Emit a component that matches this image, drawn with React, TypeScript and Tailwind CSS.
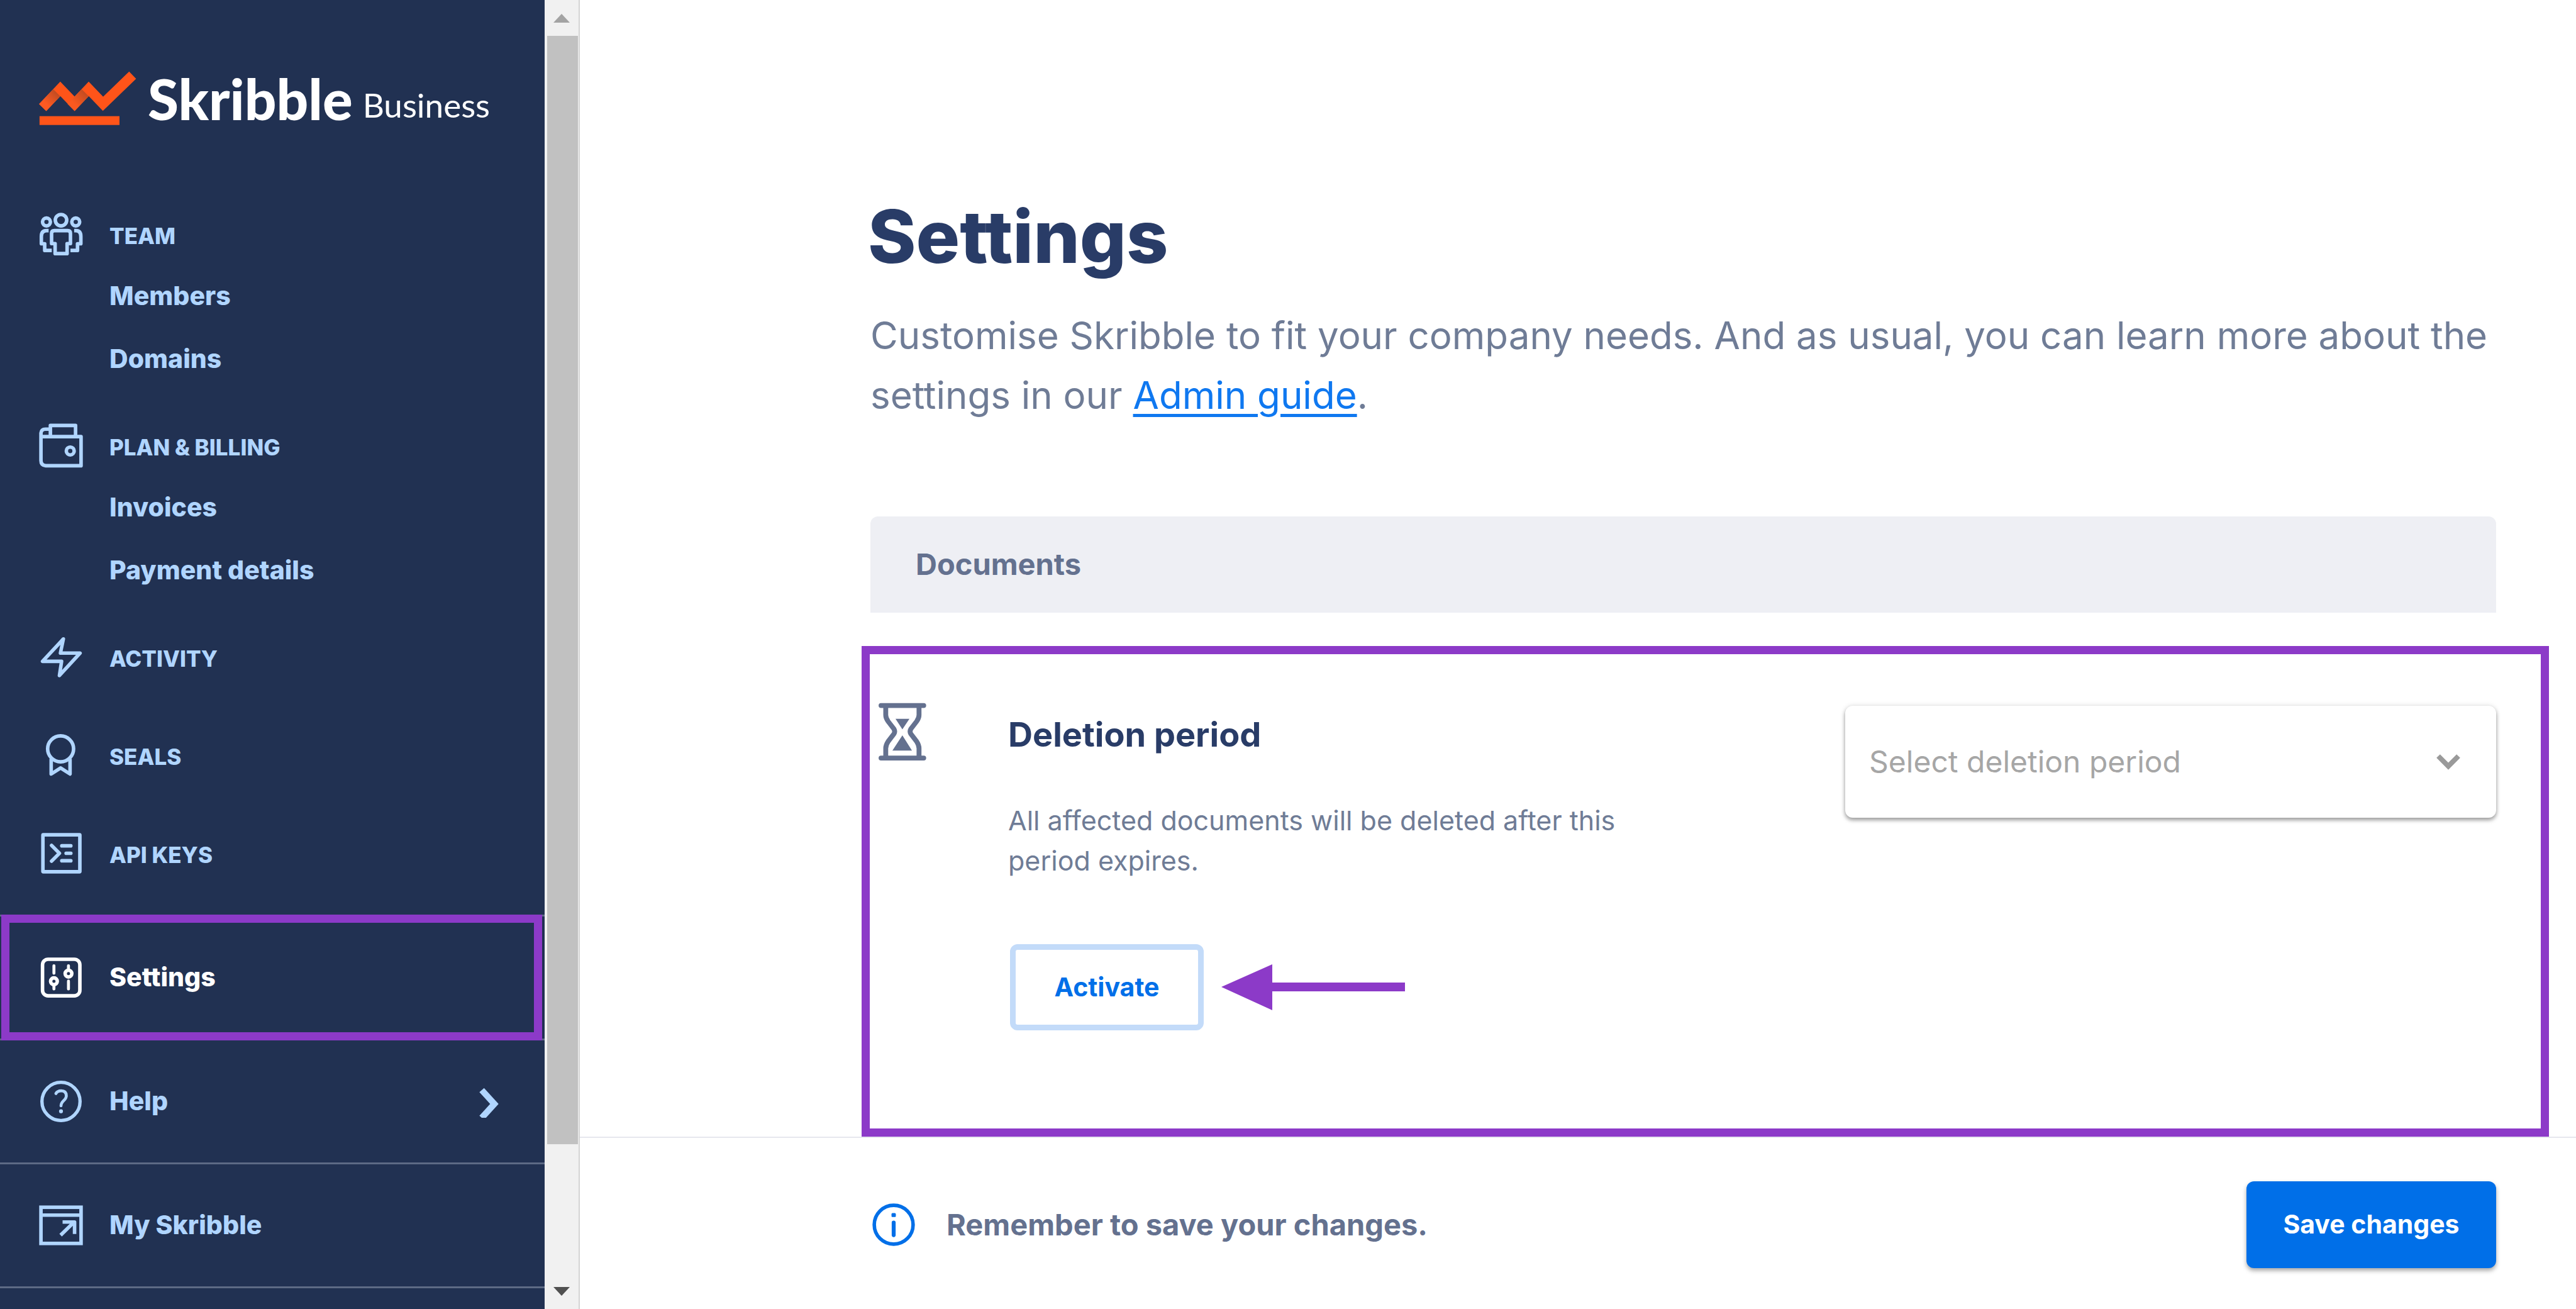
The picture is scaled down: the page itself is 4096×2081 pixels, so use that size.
import React from "react";

type IconProps = { children: React.ReactNode; viewBox: string };

function NavIcon({ children, viewBox }: IconProps) {
  return (
    <svg
      viewBox={viewBox}
      className="size-[70px] shrink-0 overflow-visible"
      fill="none"
      stroke="currentColor"
      strokeWidth="18"
      strokeLinejoin="round"
      aria-hidden="true"
    >
      {children}
    </svg>
  );
}

const TeamIcon = () => (
  <NavIcon viewBox="48 70 224 224">
    <circle cx="160" cy="102" r="29" />
    <circle cx="86" cy="111" r="20" />
    <circle cx="235" cy="111" r="20" />
    <path d="M126 155H194Q208 155 208 169V221H191V272H130V221H112V169Q112 155 126 155Z" />
    <path d="M97 155H86Q60 155 60 185V222H77V256H113" />
    <path d="M227 155H236Q261 155 261 185V222H244V256H208" />
  </NavIcon>
);

const WalletIcon = () => (
  <NavIcon viewBox="48 66 224 224">
    <path d="M58 124H262V272H82Q58 270 58 246V106Q60 86 80 86H105" />
    <path d="M106 124V67H234V124" />
    <circle cx="207" cy="197" r="20" />
  </NavIcon>
);

const BoltIcon = () => (
  <NavIcon viewBox="48 4 224 224">
    <path d="M172 16L66 130H163L152 202L257 88H157Z" />
  </NavIcon>
);

const SealIcon = () => (
  <NavIcon viewBox="48 504 224 224">
    <circle cx="158" cy="576" r="66" />
    <path d="M110 626V704L158 673L206 704V626" />
  </NavIcon>
);

const TerminalIcon = () => (
  <NavIcon viewBox="48 1004 224 224">
    <rect x="68" y="1014" width="188" height="188" rx="2" />
    <path d="M112 1068L152 1108L112 1148M164 1070H210M186 1108H210M164 1146H210" strokeLinecap="round" />
  </NavIcon>
);

const SlidersIcon = () => (
  <NavIcon viewBox="48 -112 224 224">
    <rect x="66" y="-93" width="190" height="186" rx="28" />
    <circle cx="124" cy="19" r="17" />
    <circle cx="198" cy="-20" r="17" />
    <path d="M124 -60V-22M124 38V58M198 -60V-40M198 18V58" strokeLinecap="round" strokeWidth="15" />
  </NavIcon>
);

const HelpIcon = () => (
  <NavIcon viewBox="48 -112 224 224">
    <circle cx="160" cy="0" r="97" strokeWidth="17" />
    <path d="M134 -40Q142 -54 161 -54Q187 -54 187 -28C187 -6 160 -2 160 22" strokeLinecap="round" strokeWidth="15" />
    <circle cx="160" cy="50" r="10" fill="currentColor" stroke="none" />
  </NavIcon>
);

const WindowIcon = () => (
  <NavIcon viewBox="48 -112 224 224">
    <rect x="58" y="-92" width="204" height="184" strokeLinejoin="miter" />
    <path d="M58 -52H262M158 50L226 -16M168 -17H229V44" />
  </NavIcon>
);

function LogoMark() {
  return (
    <svg viewBox="50 60 496 276" className="h-[86px] w-[155px]" aria-hidden="true">
      <defs>
        <linearGradient id="fold1" gradientUnits="userSpaceOnUse" x1="86" y1="228" x2="140" y2="172">
          <stop offset="0" stopColor="#ff5a22" />
          <stop offset="1" stopColor="#c24c22" />
        </linearGradient>
        <linearGradient id="fold2" gradientUnits="userSpaceOnUse" x1="231" y1="228" x2="286" y2="172">
          <stop offset="0" stopColor="#f9591f" />
          <stop offset="1" stopColor="#c24c22" />
        </linearGradient>
      </defs>
      <path d="M68 246L158 151L231 227L303 151L376 227L527 81" fill="none" stroke="#ff5419" strokeWidth="51" />
      <path d="M50 228L122 152L158 188L86 264Z" fill="url(#fold1)" />
      <path d="M208 215L267 152L303 188L231 264L195 228Z" fill="url(#fold2)" />
      <rect x="52" y="290" width="408" height="45" fill="#ff5419" />
    </svg>
  );
}

function Hourglass() {
  return (
    <svg viewBox="30 38 255 302" className="h-[94px] w-[80px] shrink-0" fill="none" stroke="#64718f" aria-hidden="true">
      <path d="M48 56H266M48 324H266" strokeWidth="25" strokeLinecap="round" />
      <path
        d="M72 60V105Q72 120 84 137L114 176Q121 188 114 201L84 240Q72 258 72 275V320M242 60V105Q242 120 230 137L200 176Q193 188 200 201L230 240Q242 258 242 275V320"
        strokeWidth="25"
      />
      <path d="M122 124H193L157 178ZM157 208L206 286H106Z" fill="#64718f" stroke="none" />
    </svg>
  );
}

function NavSection({ icon, label, children }: { icon: React.ReactNode; label: string; children?: React.ReactNode }) {
  return (
    <li>
      <a href="#" className="flex h-[92px] items-center gap-[42px] text-[35px] font-extrabold">
        {icon}
        {label}
      </a>
      {children && <ul className="pl-28">{children}</ul>}
    </li>
  );
}

function NavSub({ label }: { label: string }) {
  return (
    <li>
      <a href="#" className="flex h-[100px] items-center text-[41px] font-extrabold">
        {label}
      </a>
    </li>
  );
}

function Sidebar() {
  return (
    <aside className="flex w-[866px] shrink-0 flex-col overflow-hidden bg-[#213152] text-[#b0d5ff]">
      <div className="mt-[113px] mb-32 flex h-[88px] items-end pl-[62px] font-['Lato',sans-serif] text-white">
        <div className="self-start">
          <LogoMark />
        </div>
        <span className="ml-[18px] text-[89px] leading-[88px] font-black">Skribble</span>
        <span className="mb-2 ml-4 text-[53px] leading-[52px]">Business</span>
      </div>
      <nav aria-label="Main" className="flex flex-1 flex-col">
        <ul className="flex flex-col gap-11 pl-[62px]">
          <NavSection icon={<TeamIcon />} label="TEAM">
            <NavSub label="Members" />
            <NavSub label="Domains" />
          </NavSection>
          <NavSection icon={<WalletIcon />} label="PLAN &amp; BILLING">
            <NavSub label="Invoices" />
            <NavSub label="Payment details" />
          </NavSection>
        </ul>
        <ul className="mt-11 mb-[49px] flex flex-col gap-16 pl-[62px]">
          <NavSection icon={<BoltIcon />} label="ACTIVITY" />
          <NavSection icon={<SealIcon />} label="SEALS" />
          <NavSection icon={<TerminalIcon />} label="API KEYS" />
        </ul>
        <ul className="border-b-[3px] border-[#5d6a85] text-[41px] font-extrabold">
          <li className="relative h-[197px] border-t-[3px] border-[#5d6a85]">
            <a href="#" aria-current="page" className="flex h-full items-center gap-[42px] pl-[62px] text-white">
              <SlidersIcon />
              Settings
            </a>
            <div className="pointer-events-none absolute -top-[3px] right-[4px] -bottom-[3px] left-[2px] z-10 border-[13px] border-[#8c3ac8]" />
          </li>
          <li className="h-[197px] border-t-[3px] border-[#5d6a85]">
            <a href="#" className="flex h-full items-center gap-[42px] pr-[70px] pl-[62px]">
              <HelpIcon />
              Help
              <svg viewBox="0 0 36 52" className="ml-auto h-[52px] w-[36px]" fill="none" stroke="currentColor" strokeWidth="10" aria-hidden="true">
                <path d="M6 8L26 30L6 52" />
              </svg>
            </a>
          </li>
          <li className="h-[197px] border-t-[3px] border-[#5d6a85]">
            <a href="#" className="flex h-full items-center gap-[42px] pl-[62px]">
              <WindowIcon />
              My Skribble
            </a>
          </li>
        </ul>
      </nav>
    </aside>
  );
}

function Scrollbar() {
  return (
    <div className="flex w-14 shrink-0 flex-col items-center border-r-2 border-[#d4d4d4] bg-[#f1f1f1]" aria-hidden="true">
      <div className="flex h-[57px] items-center justify-center">
        <svg viewBox="0 0 26 14" className="h-[14px] w-[26px]" fill="#a3a3a3">
          <path d="M0 14L13 0L26 14Z" />
        </svg>
      </div>
      <div className="flex w-full flex-1 flex-col pr-[1px] pl-[4px]">
        <div className="h-[89.6%] bg-[#c1c1c1]" />
      </div>
      <div className="flex h-[57px] items-center justify-center">
        <svg viewBox="0 0 26 14" className="h-[14px] w-[26px]" fill="#505050">
          <path d="M0 0L13 14L26 0Z" />
        </svg>
      </div>
    </div>
  );
}

export default function App() {
  return (
    <div className="flex h-screen overflow-hidden bg-white font-['Inter',sans-serif]">
      <Sidebar />
      <Scrollbar />
      <div className="flex min-w-0 flex-1 flex-col">
        <main className="flex flex-1 flex-col pt-[316px] pr-[127px] pl-[462px]">
          <h1 className="-ml-1 text-[116px] leading-[120px] font-extrabold text-[#293c67]">Settings</h1>
          <p className="mt-[50px] -mr-10 text-[60px] leading-[95px] text-[#6f7c96]">
            Customise Skribble to fit your company needs. And as usual, you can learn more about the settings in our{" "}
            <a href="#" className="text-[#0f78f0] underline decoration-[5px] underline-offset-[8px]">
              Admin guide
            </a>
            .
          </p>
          <h2 className="mt-[145px] flex h-[153px] items-center rounded-t-xl bg-[#eeeff4] pl-[72px] text-[47px] font-bold text-[#64718f]">
            Documents
          </h2>
          <section className="mt-[53px] -mr-[84px] -ml-[14px] flex flex-1 items-start border-[13px] border-[#8c3ac8] pt-[76px] pr-[71px] pl-3">
            <Hourglass />
            <div className="mt-5 ml-32">
              <h3 className="text-[54px] leading-[64px] font-bold text-[#293c67]">Deletion period</h3>
              <p className="mt-[72px] w-[1000px] text-[43px] leading-[64px] text-[#6f7c96]">
                All affected documents will be deleted after this period expires.
              </p>
              <div className="mt-[101px] ml-[3px] flex items-center gap-7">
                <button
                  type="button"
                  className="h-[137px] w-[308px] rounded-xl border-[9px] border-[#c3dbf9] text-[41px] font-bold text-[#006fe8]"
                >
                  Activate
                </button>
                <svg viewBox="0 0 292 74" className="h-[74px] w-[292px]" fill="#8c3ac8" aria-hidden="true">
                  <path d="M0 36L81 0V29H292V43H81V73Z" />
                </svg>
              </div>
            </div>
            <div className="relative mt-[6px] ml-auto w-[1035px]">
              <select
                aria-label="Deletion period"
                className="h-[178px] w-full appearance-none rounded-xl bg-white pl-[38px] text-[48px] text-[#a6a6a6] shadow-[0_4px_6px_rgba(0,0,0,0.35),0_0_8px_rgba(0,0,0,0.12)]"
              >
                <option>Select deletion period</option>
              </select>
              <svg
                viewBox="0 0 40 26"
                className="pointer-events-none absolute top-[76px] right-[56px] h-[26px] w-[40px]"
                fill="none"
                stroke="#9a9a9a"
                strokeWidth="8"
                aria-hidden="true"
              >
                <path d="M4 4L20 20L36 4" />
              </svg>
            </div>
          </section>
        </main>
        <footer className="flex h-[274px] shrink-0 items-center border-t-2 border-[#e6e7ee] pt-1 pr-[127px] pl-[465px]">
          <svg viewBox="37 40 218 218" className="size-[68px]" fill="none" stroke="#006fe8" aria-hidden="true">
            <circle cx="146" cy="149" r="99" strokeWidth="18" />
            <path d="M146 138V202" strokeWidth="20" strokeLinecap="round" />
            <rect x="135" y="90" width="22" height="20" rx="5" fill="#006fe8" stroke="none" />
          </svg>
          <p className="ml-[50px] text-[47px] font-bold text-[#64718f]">Remember to save your changes.</p>
          <button
            type="button"
            className="ml-auto h-[138px] w-[397px] rounded-xl bg-[#006fe8] text-[41px] font-bold text-white shadow-[0_4px_7px_rgba(0,0,0,0.35)]"
          >
            Save changes
          </button>
        </footer>
      </div>
    </div>
  );
}
